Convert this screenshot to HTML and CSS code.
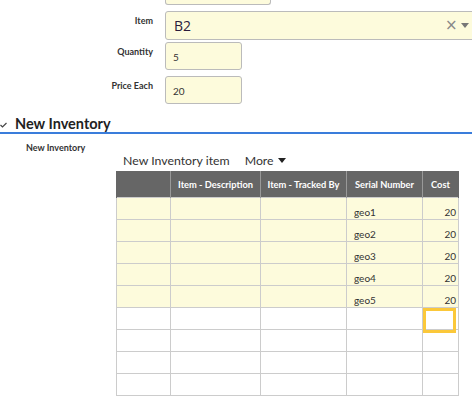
FILE: index.html
```html
<!DOCTYPE html>
<html>
<head>
<meta charset="utf-8">
<link rel="stylesheet" href="styles.css">
</head>
<body>
<div class="page">
  <div class="form">
    <div class="row row-top">
      <div class="label"></div>
      <div class="input input-top"></div>
    </div>
    <div class="row row-item">
      <div class="label">Item</div>
      <div class="input input-item">
        <span class="val-big">B2</span>
        <span class="ctrls"><span class="clear">×</span><span class="caret"></span></span>
      </div>
    </div>
    <div class="row row-qty">
      <div class="label">Quantity</div>
      <div class="input input-small"><span class="val">5</span></div>
    </div>
    <div class="row row-price">
      <div class="label">Price Each</div>
      <div class="input input-small"><span class="val">20</span></div>
    </div>
  </div>

  <div class="section-head">
    <svg class="chev" width="7" height="6" viewBox="0 0 7 6"><path d="M0.5 3 L2.5 5 L6.5 1" fill="none" stroke="#444" stroke-width="1.2"/></svg>
    <span class="section-title">New Inventory</span>
  </div>

  <div class="sub">
    <div class="sub-label">New Inventory</div>
    <div class="sub-body">
      <div class="toolbar">
        <span class="tb-item">New Inventory item</span>
        <span class="tb-more">More <span class="tb-caret"></span></span>
      </div>
      <table class="grid">
        <colgroup>
          <col class="c1"><col class="c2"><col class="c3"><col class="c4"><col class="c5">
        </colgroup>
        <thead>
          <tr><th></th><th>Item - Description</th><th>Item - Tracked By</th><th>Serial Number</th><th>Cost</th></tr>
        </thead>
        <tbody>
          <tr class="filled"><td></td><td></td><td></td><td>geo1</td><td class="num">20</td></tr>
          <tr class="filled"><td></td><td></td><td></td><td>geo2</td><td class="num">20</td></tr>
          <tr class="filled"><td></td><td></td><td></td><td>geo3</td><td class="num">20</td></tr>
          <tr class="filled"><td></td><td></td><td></td><td>geo4</td><td class="num">20</td></tr>
          <tr class="filled"><td></td><td></td><td></td><td>geo5</td><td class="num">20</td></tr>
          <tr><td></td><td></td><td></td><td></td><td class="focus-cell"><span class="focus"></span></td></tr>
          <tr><td></td><td></td><td></td><td></td><td></td></tr>
          <tr><td></td><td></td><td></td><td></td><td></td></tr>
          <tr><td></td><td></td><td></td><td></td><td></td></tr>
        </tbody>
      </table>
    </div>
  </div>
</div>
</body>
</html>
```

FILE: styles.css
```css
html, body {
  margin: 0;
  padding: 0;
  background: #fff;
}
body {
  width: 472px;
  height: 400px;
  overflow: hidden;
  font-family: Lato, "Open Sans", sans-serif;
  color: #333;
}
.page {
  width: 472px;
}
.form {
  display: flex;
  flex-direction: column;
}
.row {
  display: flex;
  align-items: flex-start;
}
.label {
  width: 153px;
  margin-right: 12px;
  text-align: right;
  font-size: 9px;
  font-weight: bold;
  color: #333;
  line-height: 12px;
  padding-top: 4px;
  flex: none;
}
.input {
  box-sizing: border-box;
  background: #fdfbdc;
  border: 1px solid #bbb;
  border-radius: 3px;
  display: flex;
  align-items: center;
  flex: none;
}
.input-top {
  width: 106px;
  height: 5px;
  border-top: none;
  border-radius: 0 0 3px 3px;
}
.row-item {
  margin-top: 6px;
}
.input-item {
  width: 320px;
  height: 29px;
  border-radius: 3px 0 0 3px;
  padding-left: 8px;
}
.val-big {
  font-size: 14px;
  color: #2b1b3b;
  font-family: "Open Sans", Lato, sans-serif;
}
.ctrls {
  margin-left: 254px;
  display: flex;
  align-items: center;
}
.clear {
  font-size: 15px;
  color: #888;
  font-family: "DejaVu Sans", sans-serif;
  line-height: 1;
}
.caret {
  margin-left: 3px;
  width: 0;
  height: 0;
  border-left: 4px solid transparent;
  border-right: 4px solid transparent;
  border-top: 5px solid #777;
}
.row-qty {
  margin-top: 2px;
}
.row-price {
  margin-top: 6px;
}
.input-small {
  width: 77px;
  height: 28px;
  padding-left: 7px;
}
.val {
  font-size: 10px;
  color: #333;
  padding-top: 2px;
}
.section-head {
  margin-top: 11px;
  height: 19px;
  box-sizing: border-box;
  display: flex;
  align-items: center;
  border-bottom: 2px solid #3a7ddb;
  padding-top: 1px;
}
.chev {
  margin-top: 2px;
  margin-right: 8px;
}
.section-title {
  font-size: 14.5px;
  font-weight: bold;
  color: #222;
  line-height: 16px;
}
.sub {
  display: flex;
  align-items: flex-start;
}
.sub-label {
  width: 90px;
  padding-left: 26px;
  box-sizing: border-box;
  font-size: 9px;
  font-weight: bold;
  color: #333;
  padding-top: 8px;
  line-height: 12px;
  flex: none;
}
.sub-body {
  display: flex;
  flex-direction: column;
  margin-left: 26px;
}
.toolbar {
  display: flex;
  align-items: center;
  height: 19px;
  margin-top: 17px;
  padding-left: 7px;
  font-size: 12.3px;
  color: #333;
}
.tb-more {
  margin-left: 15px;
  display: flex;
  align-items: center;
}
.tb-caret {
  margin-left: 4px;
  width: 0;
  height: 0;
  border-left: 4px solid transparent;
  border-right: 4px solid transparent;
  border-top: 5px solid #222;
}
.grid {
  border-collapse: collapse;
  table-layout: fixed;
  width: 343px;
  margin-top: 1px;
}
.c1 { width: 54px; }
.c2 { width: 90px; }
.c3 { width: 86px; }
.c4 { width: 76px; }
.c5 { width: 36px; }
.grid th {
  background: #666;
  color: #fff;
  font-size: 9.3px;
  font-weight: bold;
  height: 26px;
  padding: 0;
  border-left: 1px solid #999;
  border-right: 1px solid #999;
  text-align: center;
  white-space: nowrap;
}
.grid th:first-child {
  border-left-color: #666;
}
.grid th:last-child {
  border-right-color: #666;
}
.grid td {
  border: 1px solid #ccc;
  height: 22px;
  box-sizing: border-box;
  padding: 0 7px 1px 7px;
  vertical-align: bottom;
  font-size: 10px;
  color: #333;
  line-height: 12px;
}
.grid tr.filled td {
  background: #fdfbdc;
}
.grid td.num {
  text-align: right;
  padding-right: 2px;
}
.focus-cell {
  position: relative;
}
.focus {
  position: absolute;
  left: 0;
  top: 0;
  width: 33px;
  height: 25px;
  box-sizing: border-box;
  border: 3px solid #fbc83a;
}
```
